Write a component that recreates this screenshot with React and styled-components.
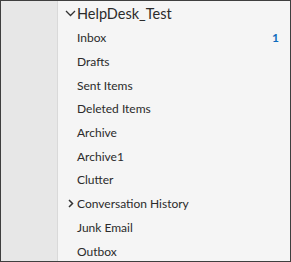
import React from "react";
import styled, { createGlobalStyle } from "styled-components";

const GlobalStyle = createGlobalStyle`
  html, body {
    margin: 0;
    padding: 0;
    background: #ffffff;
  }
  body {
    font-family: Lato, "Open Sans", sans-serif;
  }
`;

const Frame = styled.div`
  width: 291px;
  height: 262px;
  box-sizing: border-box;
  border: 1px solid #3f3f3f;
  display: flex;
  overflow: hidden;
`;

const Rail = styled.div`
  width: 56px;
  flex: none;
  background: #e7e7e7;
  border-right: 1px solid #d9d9d9;
`;

const Pane = styled.div`
  flex: 1;
  background: #f5f5f5;
  display: flex;
  flex-direction: column;
  padding-right: 11px;
`;

const Row = styled.div`
  height: ${({ $head }) => ($head ? "25px" : "23.7px")};
  flex: none;
  display: flex;
  align-items: center;
  padding-left: 6px;
  color: #2b2b2b;
  font-size: ${({ $head }) => ($head ? "14.5px" : "12px")};
  white-space: nowrap;
`;

const Chevron = styled.span`
  width: 13px;
  flex: none;
  display: flex;
  align-items: center;
  justify-content: center;
  color: #333;
`;

const Label = styled.span`
  flex: 1;
`;

const Count = styled.span`
  color: #0f6cbd;
  font-weight: 700;
  font-size: 12px;
`;

const Down = () => (
  <svg width="11" height="7" viewBox="0 0 11 7">
    <path d="M1 1l4.5 4.5L10 1" fill="none" stroke="#333" strokeWidth="1.3" />
  </svg>
);

const Right = () => (
  <svg width="6" height="9" viewBox="0 0 6 9">
    <path d="M1 1l3.5 3.5L1 8" fill="none" stroke="#333" strokeWidth="1.5" />
  </svg>
);

const folders = [
  { name: "Inbox", count: 1 },
  { name: "Drafts" },
  { name: "Sent Items" },
  { name: "Deleted Items" },
  { name: "Archive" },
  { name: "Archive1" },
  { name: "Clutter" },
  { name: "Conversation History", collapsed: true },
  { name: "Junk Email" },
  { name: "Outbox" },
];

export default function App() {
  return (
    <>
      <GlobalStyle />
      <Frame>
        <Rail />
        <Pane>
          <Row $head>
            <Chevron><Down /></Chevron>
            <Label>HelpDesk_Test</Label>
          </Row>
          {folders.map((f) => (
            <Row key={f.name}>
              <Chevron>{f.collapsed && <Right />}</Chevron>
              <Label>{f.name}</Label>
              {f.count && <Count>{f.count}</Count>}
            </Row>
          ))}
        </Pane>
      </Frame>
    </>
  );
}
